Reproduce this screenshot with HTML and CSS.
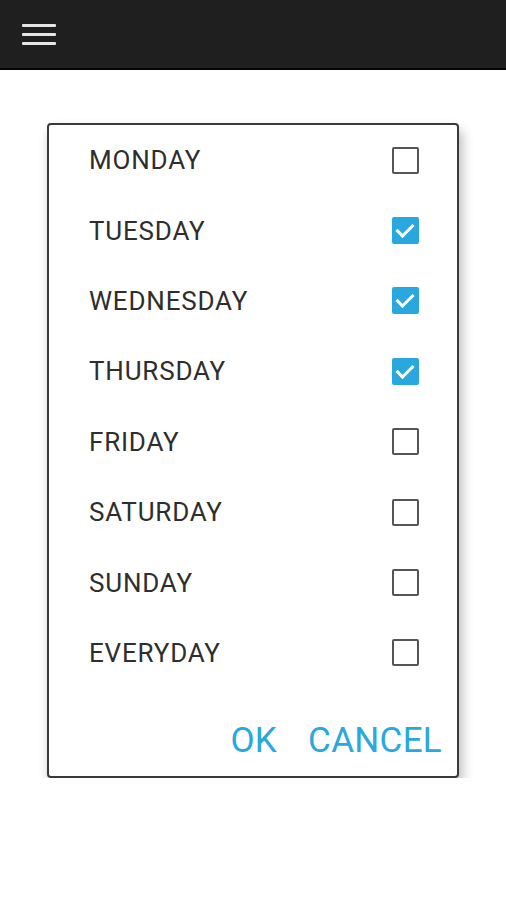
FILE: index.html
```html
<!DOCTYPE html>
<html lang="en">
<head>
    <meta charset="UTF-8">
    <meta name="viewport" content="width=device-width, initial-scale=1.0">
    <title>Repeat Days</title>
    <link rel="stylesheet" href="styles.css">
</head>
<body>
    <!-- Top Bar -->
    <div class="top-bar">
        <button class="menu-button" aria-label="Menu">
            <svg width="34" height="22" viewBox="0 0 34 22">
                <rect x="0" y="0" width="34" height="3" rx="1" fill="#e6e6e6"/>
                <rect x="0" y="9" width="34" height="3" rx="1" fill="#e6e6e6"/>
                <rect x="0" y="18" width="34" height="3" rx="1" fill="#e6e6e6"/>
            </svg>
        </button>
    </div>

    <!-- Days Dialog -->
    <div class="dialog">
        <ul class="day-list">
            <li class="day-row"><span>MONDAY</span><span class="check"></span></li>
            <li class="day-row"><span>TUESDAY</span><span class="check checked"></span></li>
            <li class="day-row"><span>WEDNESDAY</span><span class="check checked"></span></li>
            <li class="day-row"><span>THURSDAY</span><span class="check checked"></span></li>
            <li class="day-row"><span>FRIDAY</span><span class="check"></span></li>
            <li class="day-row"><span>SATURDAY</span><span class="check"></span></li>
            <li class="day-row"><span>SUNDAY</span><span class="check"></span></li>
            <li class="day-row"><span>EVERYDAY</span><span class="check"></span></li>
        </ul>

        <div class="dialog-actions">
            <button class="action">OK</button>
            <button class="action">CANCEL</button>
        </div>
    </div>

    <script>
        // Toggle a checkbox when its row is clicked
        document.querySelectorAll('.day-row').forEach(function (row) {
            row.addEventListener('click', function () {
                row.querySelector('.check').classList.toggle('checked');
            });
        });
    </script>
</body>
</html>
```

FILE: styles.css
```css
body {
    font-family: Roboto, "Liberation Sans", sans-serif;
    background-color: #fff;
    color: #2e2e2e;
    margin: 0;
    padding: 0;
}
.top-bar {
    height: 70px;
    background-color: #1f1f1f;
    border-bottom: 2px solid #050505;
    display: flex;
    align-items: center;
    padding: 2px 0 0 22px;
    box-sizing: border-box;
}
.menu-button {
    background: none;
    border: none;
    padding: 0;
    margin: 0;
    display: flex;
    cursor: pointer;
}
.dialog {
    width: 408px;
    margin: 53px auto 0;
    background-color: #fff;
    border: 2px solid #3a3a3a;
    border-radius: 4px;
    box-shadow: 3px 7px 12px rgba(0, 0, 0, 0.28);
}
.day-list {
    list-style: none;
    margin: 0;
    padding: 0;
}
.day-row {
    height: 70.4px;
    display: flex;
    align-items: center;
    justify-content: space-between;
    padding: 0 38px 0 40px;
    font-size: 26px;
    letter-spacing: 0.8px;
    cursor: pointer;
}
.check {
    width: 23px;
    height: 23px;
    border: 2.5px solid #555;
    border-radius: 2px;
    position: relative;
}
.check.checked {
    background-color: #29a8e0;
    border-color: #29a8e0;
}
.check.checked::after {
    content: "";
    position: absolute;
    left: 6px;
    top: 1px;
    width: 7px;
    height: 14px;
    border-right: 3px solid #fff;
    border-bottom: 3px solid #fff;
    transform: rotate(45deg);
}
.dialog-actions {
    display: flex;
    justify-content: flex-end;
    align-items: center;
    gap: 31px;
    height: 56px;
    padding: 24px 15px 8px 0;
}
.action {
    background: none;
    border: none;
    padding: 0;
    font-family: Roboto, "Liberation Sans", sans-serif;
    font-size: 35px;
    letter-spacing: 0.3px;
    color: #29a8e0;
    cursor: pointer;
}
```
